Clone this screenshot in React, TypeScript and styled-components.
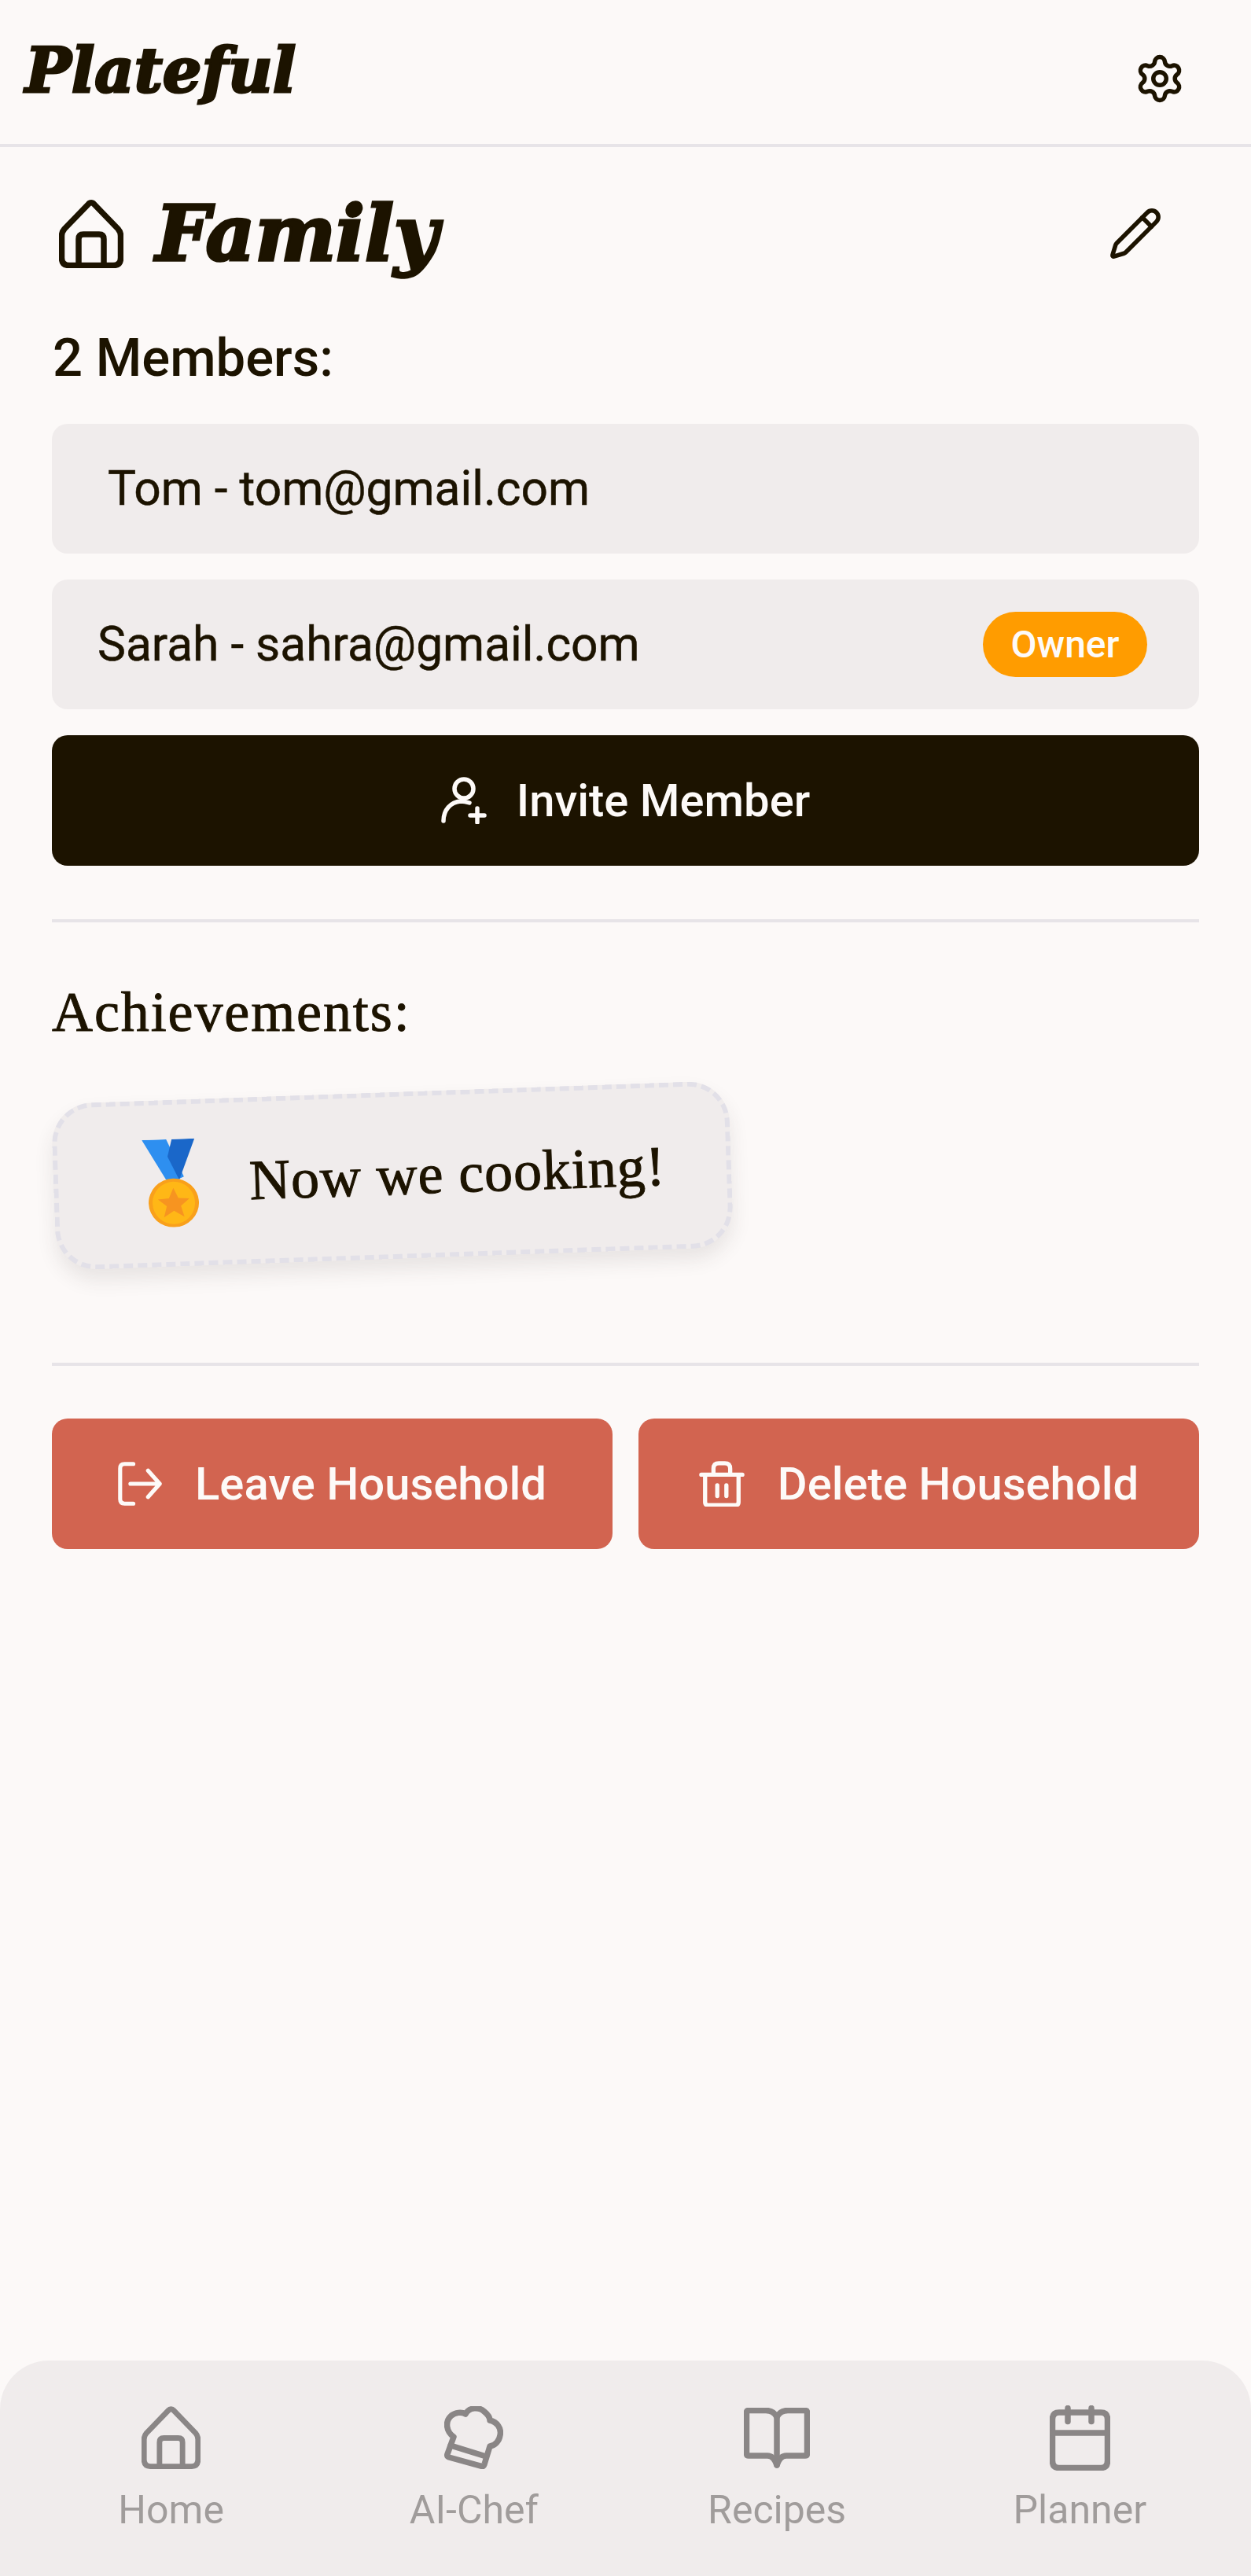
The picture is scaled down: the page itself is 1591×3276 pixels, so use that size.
import { Pencil, Settings } from "lucide-react";
import styled, { createGlobalStyle } from "styled-components";

const GlobalStyle = createGlobalStyle`
  html, body {
    margin: 0;
    padding: 0;
    background: #fcf9f8;
  }
  * {
    box-sizing: border-box;
  }
`;

const Page = styled.div`
  min-height: 100vh;
  display: flex;
  flex-direction: column;
  background: #fcf9f8;
  color: #1c1300;
  font-family: Roboto, "Liberation Sans", sans-serif;
`;

const TopBar = styled.header`
  height: 187px;
  display: flex;
  align-items: center;
  justify-content: space-between;
  padding: 0 83px 0 32px;
  border-bottom: 4px solid #e7e4e8;
`;

const Logo = styled.div`
  font-family: "DejaVu Serif", serif;
  font-weight: 700;
  font-style: italic;
  font-size: 78px;
  line-height: 1;
  -webkit-text-stroke: 3px #1c1300;
  margin-top: -4px;
`;

const SettingsIcon = styled(Settings)`
  margin-top: 16px;
`;

const Content = styled.main`
  flex: 1;
  padding: 60px 66px 0;
  display: flex;
  flex-direction: column;
`;

const TitleRow = styled.div`
  height: 100px;
  display: flex;
  align-items: center;
  justify-content: space-between;
  padding: 0 46px 0 9px;
`;

const TitleLeft = styled.div`
  display: flex;
  align-items: center;
  gap: 41px;
`;

const Title = styled.h1`
  margin: 0;
  font-family: "DejaVu Serif", serif;
  font-weight: 700;
  font-style: italic;
  font-size: 97px;
  line-height: 1;
  -webkit-text-stroke: 3.5px #1c1300;
`;

const MembersHeading = styled.h2`
  margin: 73px 0 0;
  height: 70px;
  font-size: 67px;
  line-height: 70px;
  font-weight: 500;
  padding-left: 1px;
`;

const MemberList = styled.div`
  margin-top: 49px;
  display: flex;
  flex-direction: column;
  gap: 33px;
`;

const MemberRow = styled.div<{ $indent: number }>`
  height: 165px;
  display: flex;
  align-items: center;
  justify-content: space-between;
  padding: 0 66px 0 ${(p) => p.$indent}px;
  background: #f0ecec;
  border-radius: 20px;
  font-size: 60.5px;
  -webkit-text-stroke: 0.5px #1c1300;
`;

const OwnerBadge = styled.span`
  height: 83px;
  width: 209px;
  display: flex;
  align-items: center;
  justify-content: center;
  border-radius: 42px;
  background: #ff9c00;
  color: #fdfaf8;
  font-size: 48px;
  font-weight: 500;
  -webkit-text-stroke: 0;
`;

const ActionButton = styled.button<{ $tone: "dark" | "danger" }>`
  height: 166px;
  flex: 1;
  border: 0;
  border-radius: 20px;
  display: flex;
  align-items: center;
  justify-content: center;
  background: ${(p) => (p.$tone === "dark" ? "#1c1300" : "#d26450")};
  color: #fdfaf8;
  font-family: inherit;
  font-size: 58px;
  font-weight: 500;
`;

const ButtonIcon = styled.svg<{ $size: number; $gap: number }>`
  width: ${(p) => p.$size}px;
  height: ${(p) => p.$size}px;
  margin-right: ${(p) => p.$gap}px;
  fill: none;
  stroke: currentColor;
  stroke-width: 5.5;
  stroke-linecap: round;
  stroke-linejoin: round;
  flex: none;
`;

const InviteRow = styled.div`
  margin-top: 33px;
  display: flex;
`;

const Divider = styled.hr<{ $top: number }>`
  width: 100%;
  height: 4px;
  margin: ${(p) => p.$top}px 0 0;
  border: 0;
  background: #e7e4e8;
`;

const SectionTitle = styled.h3`
  margin: 77px 0 0;
  height: 75px;
  font-family: "Liberation Serif", serif;
  font-weight: 500;
  font-size: 72px;
  line-height: 75px;
  letter-spacing: 1.9px;
  -webkit-text-stroke: 1px #1c1300;
`;

const AchievementCard = styled.div`
  width: 862px;
  height: 212px;
  margin: 64px 0 0 2px;
  padding-left: 108px;
  display: flex;
  align-items: center;
  gap: 65px;
  background: #f0ecec;
  border: 6px dashed #e2e0e8;
  border-radius: 52px;
  box-shadow: 0 14px 24px rgba(60, 50, 50, 0.1);
  transform: rotate(-2deg);
`;

const AchievementText = styled.span`
  font-family: "Liberation Serif", serif;
  font-size: 72px;
  letter-spacing: 0.9px;
  -webkit-text-stroke: 1px #1c1300;
`;

const BottomActions = styled.div`
  margin-top: 67px;
  display: flex;
  gap: 33px;
`;

const BottomNav = styled.nav`
  height: 274px;
  padding: 0 25px;
  display: grid;
  grid-template-columns: repeat(4, 1fr);
  background: #f0ecec;
  border-radius: 62px 62px 0 0;
`;

const NavItem = styled.div`
  height: 100%;
  padding-top: 50px;
  display: flex;
  flex-direction: column;
  align-items: center;
`;

const NavIconBox = styled.div`
  height: 96px;
  display: flex;
  align-items: center;
  color: #8a8686;
`;

const NavLabel = styled.span`
  margin-top: 16px;
  font-size: 50px;
  line-height: 56px;
  color: #a09c9b;
`;

const LineIcon = styled.svg<{ $w: number; $h: number }>`
  width: ${(p) => p.$w}px;
  height: ${(p) => p.$h}px;
  fill: none;
  stroke: currentColor;
  stroke-width: 7.5;
  stroke-linecap: round;
  stroke-linejoin: round;
  flex: none;
`;

const HomeIcon = ({ w, h }: { w: number; h: number }) => (
  <LineIcon $w={w} $h={h} viewBox="0 0 82 87">
    <path d="M37.5 5.5a4.5 4.5 0 0 1 7 0L75 37q3.5 4 3.5 9v28q0 9.5-9.5 9.5H13q-9.5 0-9.5-9.5V46q0-5 3.5-9z" />
    <path d="M25 83V50q0-6 6-6h20q6 0 6 6v33" />
  </LineIcon>
);

const ChefIcon = () => (
  <LineIcon $w={75} $h={80} viewBox="0 0 75 80">
    <path d="M12 39C3 33 0 20 9 12c5-4 13-5 18-2 4-8 17-10 24-3 5 4 7 8 7 11 9 2 15 10 13 19-1 7-6 13-13 14l-7 23q-1 3-3 2.5L6 65q-3-1-2-4z" />
    <path d="M8 50l42 13" />
  </LineIcon>
);

const BookIcon = () => (
  <LineIcon $w={84} $h={77} viewBox="0 0 84 77">
    <path d="M3.5 6q0-2.5 2.5-2.5h22q10 0 14 8.5 4-8.5 14-8.5h22q2.5 0 2.5 2.5v52q0 3-2.5 3H54q-8 0-12 12-4-12-12-12H6q-2.5 0-2.5-3z" />
    <path d="M42 12v61" />
  </LineIcon>
);

const CalendarIcon = () => (
  <LineIcon $w={77} $h={83} viewBox="0 0 77 83">
    <path d="M12 9h53q8.5 0 8.5 8.5v53q0 9-8.5 9H12q-8.5 0-8.5-9v-53Q3.5 9 12 9z" />
    <path d="M23 3.5v17M53 3.5v17M3.5 35h70" />
  </LineIcon>
);

const MedalIcon = () => (
  <svg width="70" height="112" viewBox="0 0 70 112" style={{ flex: "none" }}>
    <path d="M0 0h31l21 48-14 6-9-3z" fill="#2e8ff0" />
    <path d="M67 0H38l-6 22 14 30z" fill="#1a67c9" />
    <circle cx="39" cy="58" r="6" fill="none" stroke="#f6ae1c" strokeWidth="3.5" />
    <ellipse cx="38" cy="81" rx="32" ry="31" fill="#f9a01b" />
    <ellipse cx="38" cy="81" rx="27" ry="27" fill="#ffb716" />
    <path d="M38 62l6 13 14 1-11 9 4 14-13-8-13 8 4-14-11-9 14-1z" fill="#f79420" />
  </svg>
);

export default function App() {
  return (
    <Page>
      <GlobalStyle />
      <TopBar>
        <Logo>Plateful</Logo>
        <SettingsIcon size={66} strokeWidth={2} color="#1c1300" />
      </TopBar>
      <Content>
        <TitleRow>
          <TitleLeft>
            <HomeIcon w={82} h={87} />
            <Title>Family</Title>
          </TitleLeft>
          <Pencil size={70} strokeWidth={1.9} />
        </TitleRow>
        <MembersHeading>2 Members:</MembersHeading>
        <MemberList>
          <MemberRow $indent={71}>
            <span>Tom - tom@gmail.com</span>
          </MemberRow>
          <MemberRow $indent={58}>
            <span>Sarah - sahra@gmail.com</span>
            <OwnerBadge>Owner</OwnerBadge>
          </MemberRow>
        </MemberList>
        <InviteRow>
          <ActionButton $tone="dark">
            <ButtonIcon $size={60} $gap={36} viewBox="0 0 60 60">
              <circle cx="29" cy="15" r="12" />
              <path d="M3 56c0-14 9-24 22-25 4 0 8 1 11 2" />
              <path d="M46 40v18M37 49h18" />
            </ButtonIcon>
            Invite Member
          </ActionButton>
        </InviteRow>
        <Divider $top={68} />
        <SectionTitle>Achievements:</SectionTitle>
        <AchievementCard>
          <MedalIcon />
          <AchievementText>Now we cooking!</AchievementText>
        </AchievementCard>
        <Divider $top={132} />
        <BottomActions>
          <ActionButton $tone="danger">
            <ButtonIcon $size={56} $gap={42} viewBox="0 0 60 60">
              <path d="M21 3H9Q3 3 3 9v42q0 6 6 6h12" />
              <path d="M17 30h40M41 12l16 18-16 18" />
            </ButtonIcon>
            Leave Household
          </ActionButton>
          <ActionButton $tone="danger">
            <ButtonIcon $size={58} $gap={42} viewBox="0 0 60 60">
              <path d="M3 18h54M8 18v36q0 4 4 4h36q4 0 4-4V18" />
              <path d="M19 18v-8q0-7 7-7h8q7 0 7 7v8M24 32v14M36 32v14" />
            </ButtonIcon>
            Delete Household
          </ActionButton>
        </BottomActions>
      </Content>
      <BottomNav>
        <NavItem>
          <NavIconBox>
            <HomeIcon w={75} h={80} />
          </NavIconBox>
          <NavLabel>Home</NavLabel>
        </NavItem>
        <NavItem>
          <NavIconBox>
            <ChefIcon />
          </NavIconBox>
          <NavLabel>AI-Chef</NavLabel>
        </NavItem>
        <NavItem>
          <NavIconBox>
            <BookIcon />
          </NavIconBox>
          <NavLabel>Recipes</NavLabel>
        </NavItem>
        <NavItem>
          <NavIconBox>
            <CalendarIcon />
          </NavIconBox>
          <NavLabel>Planner</NavLabel>
        </NavItem>
      </BottomNav>
    </Page>
  );
}
